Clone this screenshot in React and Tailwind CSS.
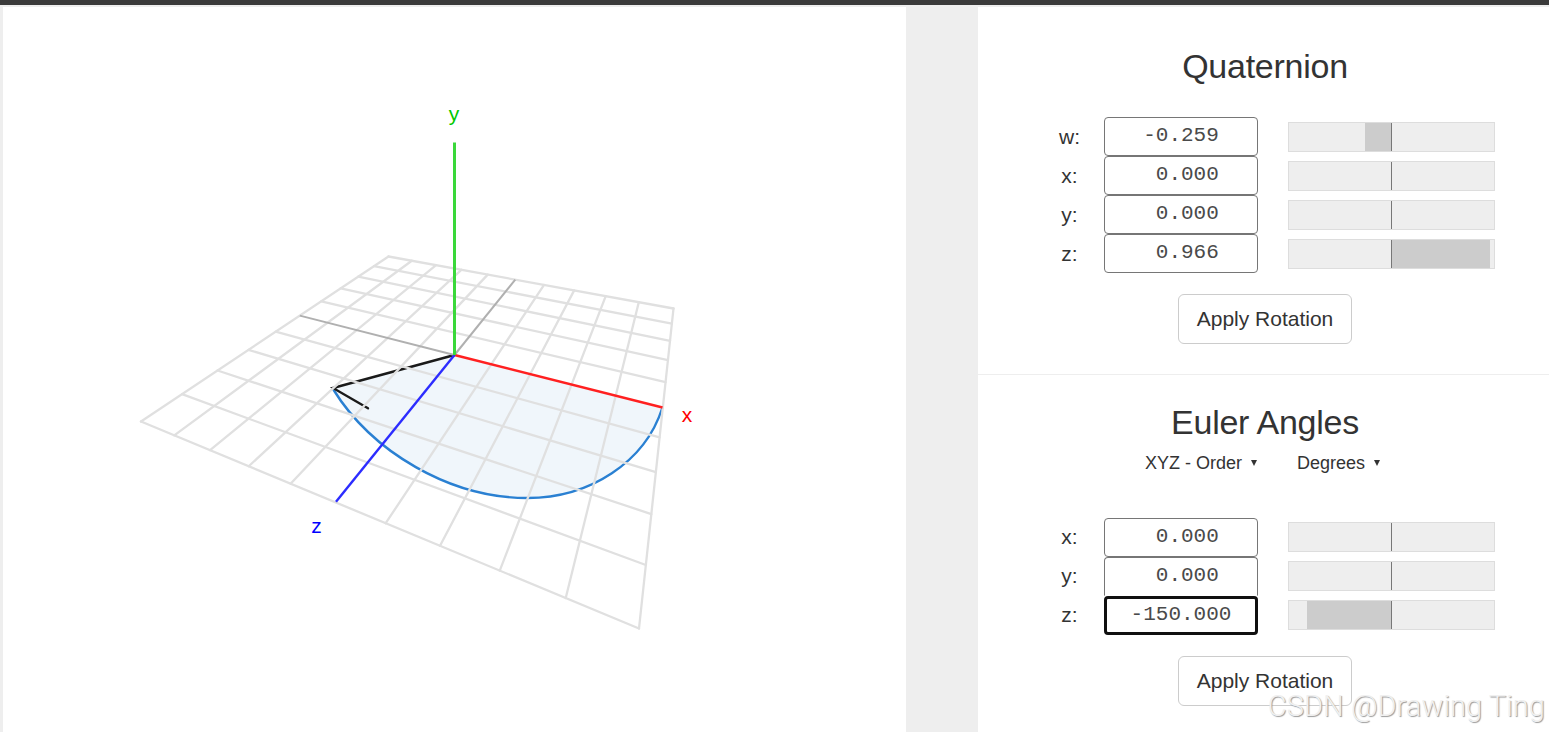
const quaternion = [
  { name: "w", text: "-0.259", value: -0.259 },
  { name: "x", text: " 0.000", value: 0 },
  { name: "y", text: " 0.000", value: 0 },
  { name: "z", text: " 0.966", value: 0.966 },
];

const euler = [
  { name: "x", text: " 0.000", value: 0 },
  { name: "y", text: " 0.000", value: 0 },
  { name: "z", text: "-150.000", value: -0.833, focused: true },
];

// ground plane corners on screen: back left, back right, front right, front left
const corners = [
  [388.5, 256.5],
  [673.5, 308.5],
  [639, 628.5],
  [141, 421.5],
];

// perspective projection of the unit square onto the corners
function project(u, v) {
  const [[x0, y0], [x1, y1], [x2, y2], [x3, y3]] = corners;
  const dx1 = x1 - x2;
  const dx2 = x3 - x2;
  const sx = x0 - x1 + x2 - x3;
  const dy1 = y1 - y2;
  const dy2 = y3 - y2;
  const sy = y0 - y1 + y2 - y3;
  const den = dx1 * dy2 - dx2 * dy1;
  const g = (sx * dy2 - dx2 * sy) / den;
  const h = (dx1 * sy - sx * dy1) / den;
  const w = g * u + h * v + 1;
  return [
    ((x1 - x0 + g * x1) * u + (x3 - x0 + h * x3) * v + x0) / w,
    ((y1 - y0 + g * y1) * u + (y3 - y0 + h * y3) * v + y0) / w,
  ];
}

const arc = "M662.3 408 C645 462 590 498 527.3 498 C450 498 372 452 333 389";
const steps = [0, 1, 2, 3, 4, 6, 7, 8, 9, 10];

function Line({ from, to, ...props }) {
  return <line x1={from[0]} y1={from[1]} x2={to[0]} y2={to[1]} {...props} />;
}

function Scene() {
  return (
    <svg
      className="block h-[725px] w-[903px] font-['Liberation_Sans',Arial,sans-serif] text-[21px]"
      viewBox="3 7 903 725"
    >
      <path d={`${arc} L454.5 355 Z`} fill="#f0f6fb" />
      <path d={arc} fill="none" stroke="#2a80d2" strokeWidth="2.4" />
      <path d="M454.5 355 L333 388 L368 408.3" fill="none" stroke="#1a1a1a" strokeWidth="2.4" strokeLinecap="round" />

      <g stroke="#e0e0e0" strokeWidth="2.3" strokeLinecap="round">
        {steps.map((i) => (
          <g key={i}>
            <Line from={project(i / 10, 0)} to={project(i / 10, 1)} />
            <Line from={project(0, i / 10)} to={project(1, i / 10)} />
          </g>
        ))}
      </g>

      <g stroke="#b0b0b0" strokeWidth="2">
        <Line from={project(0, 0.5)} to={[454.5, 355]} />
        <Line from={project(0.5, 0)} to={[454.5, 355]} />
      </g>
      <g strokeWidth="2.4">
        <Line from={[454.5, 355]} to={[662.5, 407.5]} stroke="#ff2020" />
        <Line from={[454.5, 355]} to={[336, 501.8]} stroke="#2c2cff" />
        <Line from={[454.5, 355]} to={[454.5, 142.5]} stroke="#3ad83a" strokeWidth="3" />
      </g>

      <g textAnchor="middle">
        <text x="454" y="121" fill="#00c800">y</text>
        <text x="687" y="422" fill="#ff0000">x</text>
        <text x="316.5" y="533" fill="#0000ff">z</text>
      </g>
    </svg>
  );
}

function Slider({ value }) {
  const width = Math.abs(value) * 102;
  return (
    <div className="relative h-[30px] w-[207px] border border-[#ddd] bg-[#eee]">
      <div
        className="absolute inset-y-0 bg-[#ccc]"
        style={{ width, left: value < 0 ? 102.5 - width : 102.5 }}
      />
      <div className="absolute inset-y-0 left-[102px] w-px bg-[#777]" />
    </div>
  );
}

function Rows({ rows, labelOffset, textOffset, sliderOffset }) {
  return (
    <div className="ml-[70px]">
      {rows.map((row, i) => (
        <div key={row.name} className="flex h-[39px] items-start">
          <div className={`w-[43px] text-center leading-8 ${labelOffset}`}>{row.name}:</div>
          <div
            className={`ml-[13px] h-[39px] w-[154px] whitespace-pre rounded-[4px] text-center font-['Liberation_Mono','Courier_New',monospace] text-[#4a4a4a] ${
              row.focused
                ? "border-[3px] border-[#101010] leading-[31px]"
                : `border border-[#767676] ${textOffset}`
            } ${rows[i + 1]?.focused ? "rounded-b-none border-b-white" : ""}`}
          >
            {row.text}
          </div>
          <div className={`ml-[30px] ${sliderOffset}`}>
            <Slider value={row.value} />
          </div>
        </div>
      ))}
    </div>
  );
}

function ApplyButton() {
  return (
    <button className="mx-auto mt-[21px] block h-[50px] w-[174px] rounded-md border border-[#ccc] bg-white text-[#333]">
      Apply Rotation
    </button>
  );
}

function Select({ label }) {
  return (
    <div className="flex items-center gap-[9px]">
      {label}
      <svg className="mb-[2px] h-[6px] w-[6px]" viewBox="0 0 6 6">
        <path d="M0 0H6L3 6Z" fill="#333" />
      </svg>
    </div>
  );
}

export default function App() {
  return (
    <div className="relative h-[732px] w-[1549px] overflow-hidden bg-[#eee] font-['Liberation_Sans',Arial,sans-serif] text-[21px] text-[#333]">
      <div className="mb-[2px] h-[5px] bg-[#3a3a3a]" />
      <div className="flex h-[725px] pl-[3px]">
        <div className="w-[903px] shrink-0 bg-white">
          <Scene />
        </div>

        <div className="ml-[72px] w-[574px] shrink-0 bg-white">
          <section className="h-[368px] border-b border-[#eee] pt-[39px]">
            <h2 className="h-[71px] text-center text-[34px] leading-10 tracking-[-0.25px]">Quaternion</h2>
            <Rows
              rows={quaternion}
              labelOffset="pt-[4px]"
              textOffset="leading-[36px]"
              sliderOffset="pt-[5px]"
            />
            <ApplyButton />
          </section>

          <section className="pt-[27px]">
            <h2 className="text-center text-[34px] leading-10 tracking-[-0.25px]">Euler Angles</h2>
            <div className="mb-[33px] ml-[167px] flex h-[43px] items-center gap-10 text-[18px]">
              <Select label="XYZ - Order" />
              <Select label="Degrees" />
            </div>
            <Rows
              rows={euler}
              labelOffset="pt-[3px]"
              textOffset="leading-[35px]"
              sliderOffset="pt-[4px]"
            />
            <ApplyButton />
          </section>
        </div>
      </div>

      <div className="absolute bottom-[8px] right-[4px] whitespace-nowrap font-['Roboto',sans-serif] text-[29px] font-light leading-9 tracking-[0.08px] text-[#f0f0f0] [text-shadow:1px_1px_1px_#999]">
        CSDN @Drawing Ting
      </div>
    </div>
  );
}
